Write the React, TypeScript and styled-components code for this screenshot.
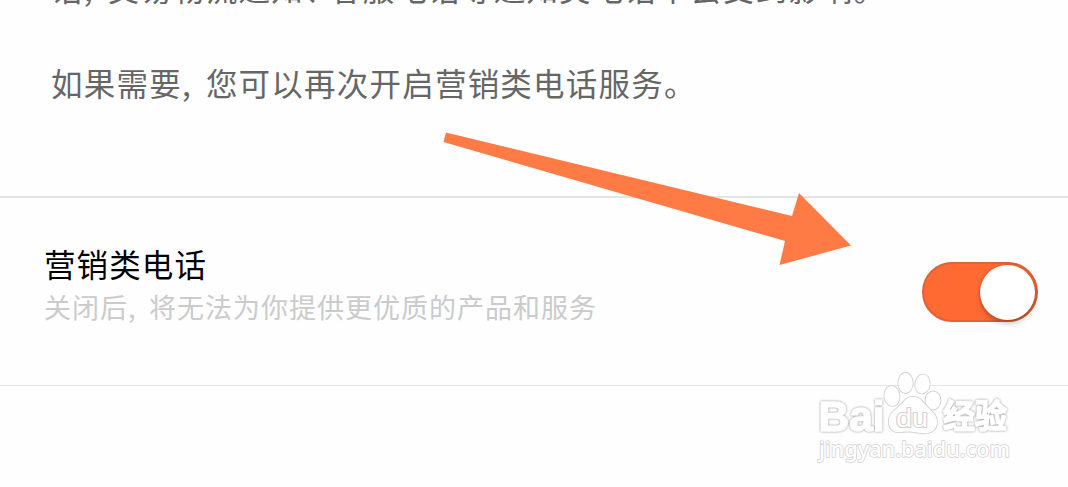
import React from "react";
import styled, { createGlobalStyle } from "styled-components";

const GlobalStyle = createGlobalStyle`
  html, body { margin: 0; padding: 0; background: #fefefe; overflow: hidden; }
  * { box-sizing: border-box; }
`;

const Page = styled.main`
  position: relative;
  width: 1068px;
  height: 487px;
  overflow: hidden;
  background: #fefefe;
  font-family: "Noto Sans CJK SC", "Noto Sans", sans-serif;
`;

const Notice = styled.section`
  height: 198px;
  padding-left: 51px;
  border-bottom: 2px solid #e3e5e5;
  color: #666;
  overflow: hidden;
`;

const Paragraph = styled.p`
  margin: 0;
  height: 95px;
  line-height: 48px;
  font-size: 31.5px;
  letter-spacing: 1.22px;
  white-space: nowrap;

  &:first-child {
    margin-top: -37px;
  }
`;

const Mark = styled.span<{ $width: number }>`
  display: inline-block;
  width: ${(p) => p.$width}px;
  letter-spacing: 0;
`;

const SettingRow = styled.section`
  display: flex;
  justify-content: space-between;
  height: 188px;
  padding: 42px 30px 0 44px;
  border-bottom: 1px solid #e6e6e6;
`;

const Title = styled.h2`
  margin: 0;
  font-size: 31.5px;
  font-weight: 400;
  line-height: 46px;
  letter-spacing: 1.1px;
  color: #000;
`;

const Description = styled.p`
  margin: 1px 0 0;
  font-size: 27px;
  font-weight: 400;
  line-height: 40px;
  letter-spacing: 1px;
  white-space: nowrap;
  color: #cbcbcb;
`;

const Switch = styled.button`
  display: flex;
  justify-content: flex-end;
  align-items: center;
  width: 116px;
  height: 60px;
  margin: 22px 0 0;
  padding: 0 1px;
  border: 2px solid #de6236;
  border-radius: 30px;
  background: #ff6a33;
`;

const Knob = styled.span`
  width: 55px;
  height: 55px;
  border-radius: 50%;
  background: #fff;
  box-shadow: 0 4px 5px rgba(0, 0, 0, 0.2), 0 0 3px rgba(90, 30, 0, 0.35);
`;

const Arrow = styled.svg`
  position: absolute;
  left: 440px;
  top: 128px;
`;

const Watermark = styled.svg`
  position: absolute;
  left: 810px;
  top: 365px;
  fill: #fff;
  stroke: #d2d2d2;
  stroke-linejoin: round;
  paint-order: stroke;
`;

const BrandText = styled.text`
  font-weight: 700;
  stroke: #fff;
  stroke-width: 1.6px;
  filter: drop-shadow(0 0 0.8px #909090);
`;

export default function App() {
  return (
    <Page>
      <GlobalStyle />
      <Notice>
        <Paragraph>
          话<Mark $width={24}>,</Mark>交易物流通知<Mark $width={26}>、</Mark>客服电话等通知类电话不会受到影响。
        </Paragraph>
        <Paragraph>
          如果需要<Mark $width={24}>,</Mark>您可以再次开启营销类电话服务。
        </Paragraph>
      </Notice>
      <SettingRow>
        <div>
          <Title>营销类电话</Title>
          <Description>
            关闭后<Mark $width={21}>,</Mark>将无法为你提供更优质的产品和服务
          </Description>
        </div>
        <Switch type="button" role="switch" aria-checked="true" aria-label="营销类电话">
          <Knob />
        </Switch>
      </SettingRow>
      <Arrow width="416" height="142" viewBox="440 128 416 142" aria-hidden="true">
        <path d="M446 132.500L792 216L799 193L851 245.500L779.500 265L785 241L443.500 142Z" fill="#ff7b45" />
      </Arrow>
      <Watermark width="210" height="110" viewBox="0 0 210 110" aria-hidden="true">
        <g strokeWidth="1.800">
          <ellipse cx="82" cy="31" rx="7.500" ry="10" transform="rotate(-8 82 31)" />
          <ellipse cx="95.500" cy="18" rx="7.200" ry="10" />
          <ellipse cx="112.500" cy="19" rx="7.200" ry="9.500" transform="rotate(8 112.500 19)" />
          <ellipse cx="123" cy="35.500" rx="7.500" ry="9" />
          <path d="M102 32C95 32 92 40 85 45C80 49 78 53 79 59C80 65 85 68 91 67C98 66 104 67 111 68C120 70 127 65 127 57C127 48 119 45 113 37C110 33 107 32 102 32Z" />
        </g>
        <BrandText x="8.500" y="65.500" fontSize="42" fontFamily="'Liberation Sans', sans-serif" textLength="66" lengthAdjust="spacingAndGlyphs">Bai</BrandText>
        <BrandText x="133" y="63" fontSize="33" fontFamily="'Noto Sans CJK SC', sans-serif" textLength="64" lengthAdjust="spacingAndGlyphs">经验</BrandText>
        <text x="86" y="62" strokeWidth="2.200" fontFamily="'Liberation Sans', sans-serif" fontSize="26" textLength="32" lengthAdjust="spacingAndGlyphs">du</text>
        <text x="9" y="92" strokeWidth="1.600" fontFamily="'Noto Sans', sans-serif" fontWeight="500" fontSize="21.500" textLength="191" lengthAdjust="spacingAndGlyphs">jingyan.baidu.com</text>
      </Watermark>
    </Page>
  );
}
